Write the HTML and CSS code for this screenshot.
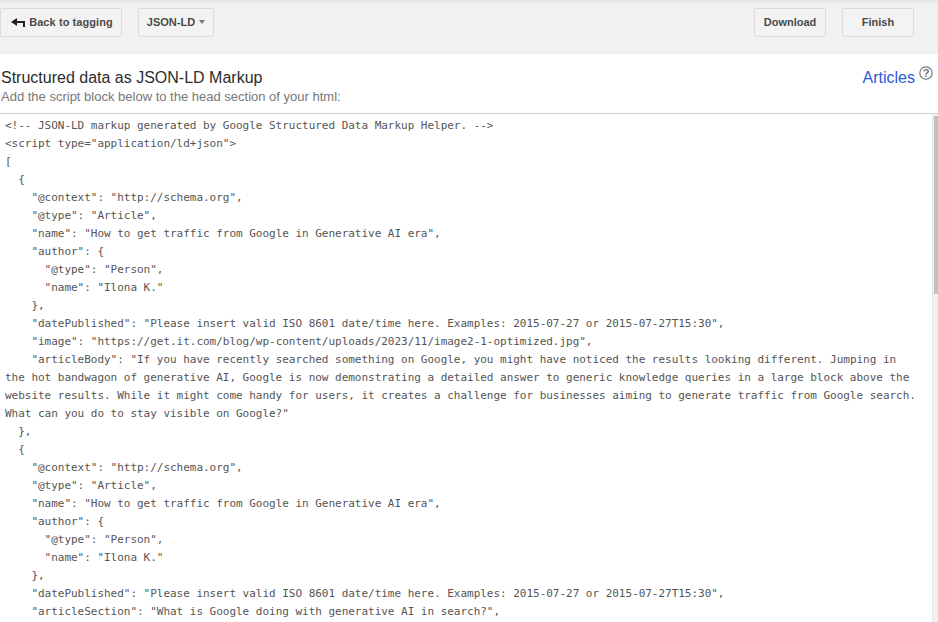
FILE: index.html
```html
<!DOCTYPE html>
<html lang="en">
<head>
<meta charset="utf-8">
<title>Structured data as JSON-LD Markup</title>
<link rel="stylesheet" href="styles.css">
</head>
<body>
<header class="toolbar">
  <div class="toolbar-group">
    <button class="btn btn-back" type="button">
      <svg class="back-icon" width="14" height="10" viewBox="0 0 14 10"><path d="M0 5 6 1v3h8v6h-2V6H6v3z" fill="#222"/></svg>
      <span>Back to tagging</span>
    </button>
    <button class="btn btn-format" type="button">JSON-LD <span class="caret"></span></button>
  </div>
  <div class="toolbar-group toolbar-right">
    <button class="btn btn-download" type="button">Download</button>
    <button class="btn btn-finish" type="button">Finish</button>
  </div>
</header>
<section class="heading">
  <div>
    <h1 class="title">Structured data as JSON-LD Markup</h1>
    <p class="subtitle">Add the script block below to the head section of your html:</p>
  </div>
  <div class="type-link">
    <a href="#">Articles</a>
    <svg class="help" width="14" height="14" viewBox="0 0 14 14"><circle cx="7" cy="7" r="6.2" fill="none" stroke="#777" stroke-width="1.2"/><text x="7" y="10.8" text-anchor="middle" class="help-mark">?</text></svg>
  </div>
</section>
<main class="code-wrap">
<pre class="code">&lt;!-- JSON-LD markup generated by Google Structured Data Markup Helper. --&gt;
&lt;script type="application/ld+json"&gt;
[
  {
    "@context": "http://schema.org",
    "@type": "Article",
    "name": "How to get traffic from Google in Generative AI era",
    "author": {
      "@type": "Person",
      "name": "Ilona K."
    },
    "datePublished": "Please insert valid ISO 8601 date/time here. Examples: 2015-07-27 or 2015-07-27T15:30",
    "image": "https://get.it.com/blog/wp-content/uploads/2023/11/image2-1-optimized.jpg",
    "articleBody": "If you have recently searched something on Google, you might have noticed the results looking different. Jumping in the hot bandwagon of generative AI, Google is now demonstrating a detailed answer to generic knowledge queries in a large block above the website results. While it might come handy for users, it creates a challenge for businesses aiming to generate traffic from Google search. What can you do to stay visible on Google?"
  },
  {
    "@context": "http://schema.org",
    "@type": "Article",
    "name": "How to get traffic from Google in Generative AI era",
    "author": {
      "@type": "Person",
      "name": "Ilona K."
    },
    "datePublished": "Please insert valid ISO 8601 date/time here. Examples: 2015-07-27 or 2015-07-27T15:30",
    "articleSection": "What is Google doing with generative AI in search?",
</pre>
<div class="scrollbar"><div class="thumb"></div></div>
</main>
</body>
</html>
```
FILE: styles.css
```css
* { box-sizing: border-box; }
html, body { height: 100%; }
body {
  margin: 0;
  height: 622px;
  overflow: hidden;
  background: #fff;
  font-family: "Liberation Sans", Arial, sans-serif;
  display: flex;
  flex-direction: column;
}
.toolbar {
  height: 54px;
  flex: none;
  background: #f1f1f1;
  background-image: linear-gradient(#e6e6e6, #f1f1f1 5px);
  display: flex;
  justify-content: space-between;
  padding: 8px 0 0;
}
.toolbar-group { display: flex; gap: 16px; align-items: flex-start; }
.toolbar-right { padding-right: 24px; }
.btn {
  height: 29px;
  padding: 0 0 2px;
  background: #f3f3f3;
  border: 1px solid #dcdcdc;
  border-radius: 2px;
  color: #4a4a4a;
  font: bold 11px "Liberation Sans", Arial, sans-serif;
  display: flex;
  align-items: center;
  justify-content: center;
}
.btn-back { width: 122px; gap: 4px; letter-spacing: 0.08px; padding-left: 2px; }
.btn-format { width: 76px; gap: 4px; }
.btn-download { width: 72px; }
.btn-finish { width: 72px; }
.caret {
  width: 0;
  height: 0;
  border-left: 3.5px solid transparent;
  border-right: 3.5px solid transparent;
  border-top: 4px solid #777;
}
.heading {
  flex: none;
  height: 60px;
  display: flex;
  justify-content: space-between;
  padding: 15px 5px 0 1px;
  border-bottom: 1px solid #cfcfcf;
}
.title {
  margin: 0;
  font-size: 16px;
  font-weight: normal;
  line-height: 18px;
  color: #2c2c2c;
}
.subtitle {
  margin: 1px 0 0;
  font-size: 13px;
  line-height: 18px;
  color: #777;
}
.type-link { display: flex; align-items: flex-start; gap: 4px; }
.type-link a {
  color: #2a5bd7;
  font-size: 16px;
  line-height: 18px;
  text-decoration: none;
}
.help { margin-top: -3px; }
.help-mark {
  font: bold 11px "Liberation Sans", Arial, sans-serif;
  fill: #777;
}
.code-wrap { flex: 1; min-height: 0; position: relative; overflow: hidden; }
.code {
  margin: 0;
  padding: 3px 20px 0 5px;
  font-family: "DejaVu Sans Mono", monospace;
  font-size: 11px;
  letter-spacing: -0.022px;
  line-height: 18px;
  color: #555;
  white-space: pre-wrap;
  word-break: normal;
}
.scrollbar {
  position: absolute;
  top: 0;
  right: 0;
  bottom: 0;
  width: 6px;
  background: #f1f1f1;
  border-left: 1px solid #e4e4e4;
  padding: 2px 0 0 1px;
}
.thumb { height: 178px; background: #c1c1c1; }
```
